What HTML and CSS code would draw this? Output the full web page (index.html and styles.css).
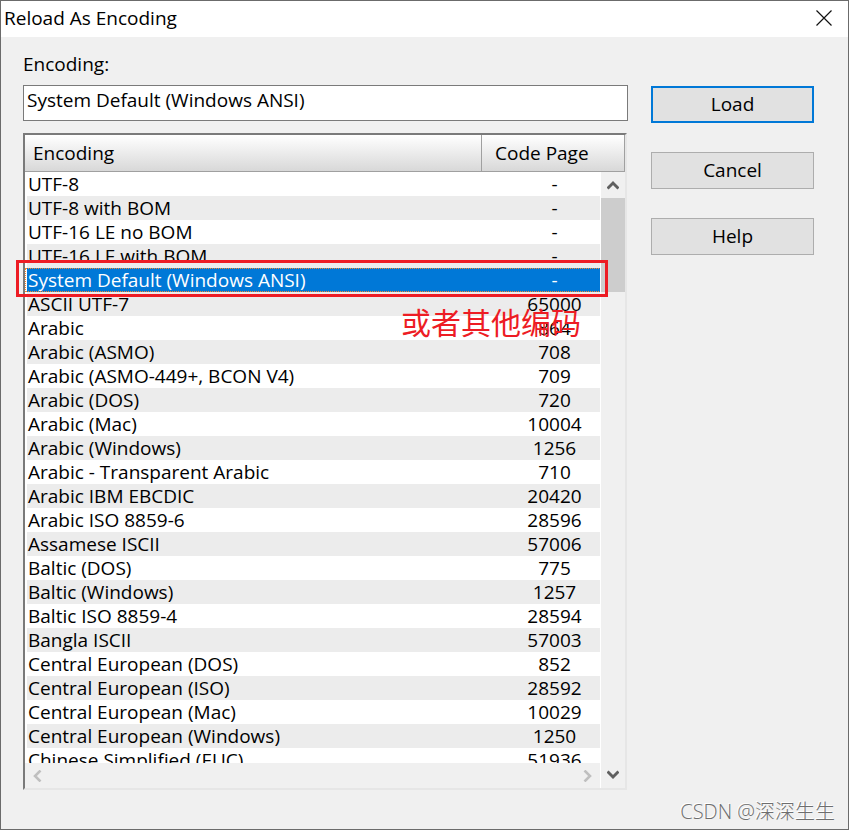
FILE: index.html
```html
<!DOCTYPE html>
<html lang="en">
<head>
  <meta charset="UTF-8">
  <meta name="viewport" content="width=device-width, initial-scale=1.0">
  <title>Reload As Encoding</title>
  <link rel="stylesheet" href="styles.css">
</head>
<body>
  <div class="dialog">
    <header class="titlebar">
      <h1>Reload As Encoding</h1>
      <button class="close" aria-label="Close">
        <svg width="16" height="16" viewBox="0 0 16 16"><path d="M0.5 0.5L15.5 15.5M15.5 0.5L0.5 15.5" fill="none" stroke="#111" stroke-width="1.2"/></svg>
      </button>
    </header>

    <main class="content">
      <div class="left">
        <label for="encoding">Encoding:</label>
        <input type="text" id="encoding" value="System Default (Windows ANSI)">

        <div class="list">
          <div class="viewport">
            <table>
              <thead>
                <tr>
                  <th class="col-name">Encoding</th>
                  <th class="col-page">Code Page</th>
                  <td class="col-bar"></td>
                </tr>
              </thead>
              <tbody>
                <tr><td>UTF-8</td><td>-</td></tr>
                <tr><td>UTF-8 with BOM</td><td>-</td></tr>
                <tr><td>UTF-16 LE no BOM</td><td>-</td></tr>
                <tr><td>UTF-16 LE with BOM</td><td>-</td></tr>
                <tr class="selected"><td>System Default (Windows ANSI)</td><td>-</td></tr>
                <tr><td>ASCII UTF-7</td><td>65000</td></tr>
                <tr><td>Arabic</td><td>864</td></tr>
                <tr><td>Arabic (ASMO)</td><td>708</td></tr>
                <tr><td>Arabic (ASMO-449+, BCON V4)</td><td>709</td></tr>
                <tr><td>Arabic (DOS)</td><td>720</td></tr>
                <tr><td>Arabic (Mac)</td><td>10004</td></tr>
                <tr><td>Arabic (Windows)</td><td>1256</td></tr>
                <tr><td>Arabic - Transparent Arabic</td><td>710</td></tr>
                <tr><td>Arabic IBM EBCDIC</td><td>20420</td></tr>
                <tr><td>Arabic ISO 8859-6</td><td>28596</td></tr>
                <tr><td>Assamese ISCII</td><td>57006</td></tr>
                <tr><td>Baltic (DOS)</td><td>775</td></tr>
                <tr><td>Baltic (Windows)</td><td>1257</td></tr>
                <tr><td>Baltic ISO 8859-4</td><td>28594</td></tr>
                <tr><td>Bangla ISCII</td><td>57003</td></tr>
                <tr><td>Central European (DOS)</td><td>852</td></tr>
                <tr><td>Central European (ISO)</td><td>28592</td></tr>
                <tr><td>Central European (Mac)</td><td>10029</td></tr>
                <tr><td>Central European (Windows)</td><td>1250</td></tr>
                <tr><td>Chinese Simplified (EUC)</td><td>51936</td></tr>
              </tbody>
            </table>
          </div>

          <div class="vbar">
            <button aria-label="Scroll up">
              <svg width="12" height="10" viewBox="0 0 12 10"><path d="M0.5 8.5L6 3L11.5 8.5" fill="none" stroke="#606060" stroke-width="3"/></svg>
            </button>
            <div class="thumb"></div>
            <button class="down" aria-label="Scroll down">
              <svg width="12" height="10" viewBox="0 0 12 10"><path d="M0.5 1.5L6 7L11.5 1.5" fill="none" stroke="#606060" stroke-width="3"/></svg>
            </button>
          </div>
          <div class="hbar">
            <button aria-label="Scroll left">
              <svg width="10" height="12" viewBox="0 0 10 12"><path d="M8.5 0.5L3 6L8.5 11.5" fill="none" stroke="#bfbfbf" stroke-width="2.6"/></svg>
            </button>
            <button aria-label="Scroll right">
              <svg width="10" height="12" viewBox="0 0 10 12"><path d="M1.5 0.5L7 6L1.5 11.5" fill="none" stroke="#bfbfbf" stroke-width="2.6"/></svg>
            </button>
          </div>

          <div class="mark"></div>
          <p class="note" lang="zh">或者其他编码</p>
        </div>
      </div>

      <div class="buttons">
        <button class="default">Load</button>
        <button>Cancel</button>
        <button>Help</button>
      </div>
    </main>

    <div class="watermark" lang="zh">CSDN @深深生生</div>
  </div>
</body>
</html>
```
FILE: styles.css
```css
* {
  box-sizing: border-box;
}
body {
  margin: 0;
  font-family: "Open Sans", "Noto Sans CJK SC", sans-serif;
  font-size: 19px;
  line-height: 24px;
  color: #000;
}
button, input {
  font: inherit;
  color: inherit;
}
.dialog {
  position: relative;
  display: flex;
  flex-direction: column;
  height: 100vh;
  background: #f0f0f0;
  border: 1px solid #6b6b6b;
}
.titlebar {
  display: flex;
  justify-content: space-between;
  align-items: center;
  height: 36px;
  padding: 0 16px 2px 3px;
  background: #fff;
}
.titlebar h1 {
  margin: 0;
  font-size: 19px;
  font-weight: 400;
}
.close {
  display: flex;
  padding: 0;
  background: none;
  border: none;
}
.content {
  flex: 1;
  min-height: 0;
  display: flex;
  gap: 23px;
  padding: 15px 34px 39px 22px;
}
.left {
  flex: 1;
  min-width: 0;
  display: flex;
  flex-direction: column;
}
#encoding {
  width: 100%;
  height: 36px;
  margin: 9px 0 12px;
  padding: 0 3px 6px;
  background: #fff;
  border: 1px solid #7a7a7a;
  border-radius: 0;
}

/* encoding list */
.list {
  position: relative;
  flex: 1;
  min-height: 0;
  margin-right: 1px;
  background: #fff;
  border: 2px solid;
  border-color: #7a7a7a #e6e6e6 #e6e6e6 #7a7a7a;
}
.viewport {
  height: 100%;
  overflow: hidden;
}
table {
  width: 100%;
  table-layout: fixed;
  border-collapse: separate;
  border-spacing: 0;
}
thead th, thead td {
  height: 37px;
  padding: 0 0 0 8px;
  font-weight: 400;
  text-align: left;
  background: linear-gradient(#fff, #d8d8d8);
  border-bottom: 1px solid #a0a0a0;
}
thead .col-page {
  width: 119px;
  padding-left: 13px;
  border-left: 1px solid #a0a0a0;
}
thead .col-bar {
  width: 25px;
  padding: 0;
  border-right: 1px solid #a0a0a0;
}
tbody td {
  height: 24px;
  padding: 0 1px;
  white-space: nowrap;
}
tbody td:first-child {
  border-left: 2px solid #fff;
}
tbody td:last-child {
  padding-left: 28px;
  padding-right: 0;
  text-align: center;
}
tbody tr:nth-child(even) td {
  background: #ececec;
}
tbody .selected td {
  color: #fff;
  background-color: #0078d7;
}
tbody .selected {
  outline: 1px dotted #ff8728;
  outline-offset: -1px;
}

/* scroll bars */
.vbar, .hbar {
  position: absolute;
  display: flex;
  background: #f0f0f0;
}
.vbar {
  top: 37px;
  right: 0;
  bottom: 0;
  width: 25px;
  flex-direction: column;
  border-left: 1px solid #fff;
}
.hbar {
  left: 0;
  right: 25px;
  bottom: 0;
  height: 25px;
  justify-content: space-between;
}
.vbar button, .hbar button {
  display: flex;
  justify-content: center;
  align-items: center;
  width: 24px;
  height: 26px;
  padding: 0;
  background: none;
  border: none;
}
.vbar .down {
  margin-top: auto;
}
.thumb {
  height: 94px;
  background: #cdcdcd;
}

/* red annotation over the list */
.mark {
  position: absolute;
  top: 125px;
  left: -9px;
  right: 17px;
  height: 37px;
  border: 3px solid #ed1c24;
}
.note {
  position: absolute;
  top: 168px;
  right: 44px;
  margin: 0;
  font-family: "Noto Sans CJK SC", sans-serif;
  font-size: 30px;
  line-height: 36px;
  color: #ed1c24;
}

.buttons {
  display: flex;
  flex-direction: column;
  gap: 29px;
  width: 163px;
  padding-top: 34px;
}
.buttons button {
  height: 37px;
  padding: 0 0 2px;
  background: #e1e1e1;
  border: 1px solid #adadad;
}
.buttons .default {
  border: 2px solid #0078d7;
}
.watermark {
  position: absolute;
  right: 13px;
  bottom: 5px;
  font-size: 20px;
  font-weight: 300;
  color: #6e6e6e;
  text-shadow: -1px -1px 0 #fff;
}
```
